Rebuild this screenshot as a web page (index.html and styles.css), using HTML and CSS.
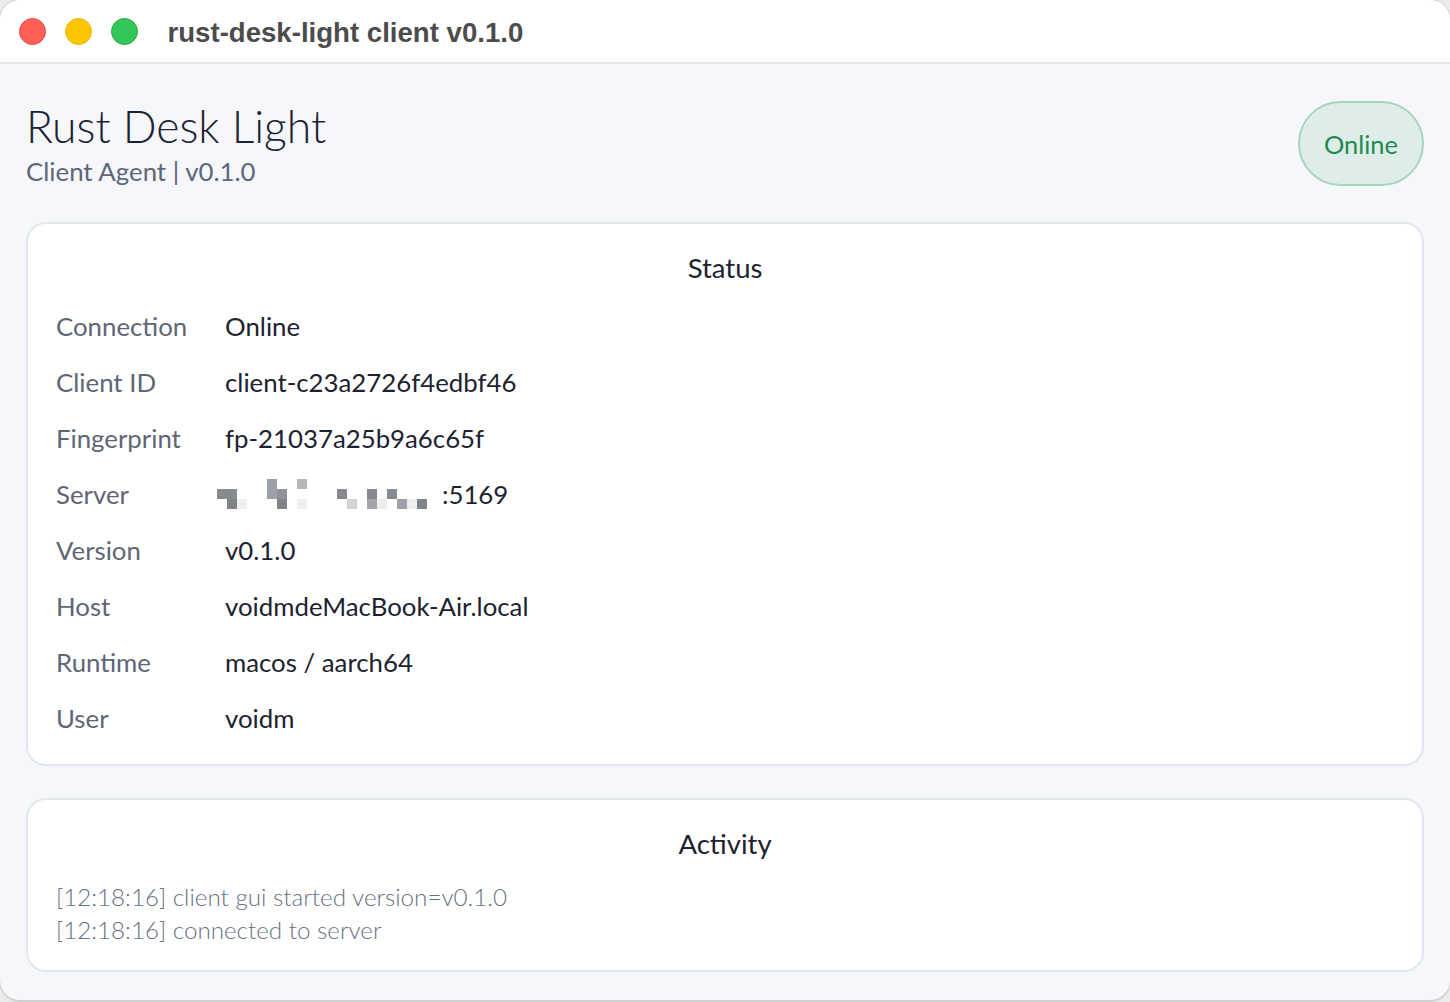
FILE: index.html
```html
<!DOCTYPE html>
<html lang="en">
<head>
<meta charset="utf-8">
<title>rust-desk-light client v0.1.0</title>
<link rel="stylesheet" href="styles.css">
</head>
<body>
<div class="window">
  <header class="titlebar">
    <div class="lights">
      <span class="light red"></span>
      <span class="light yellow"></span>
      <span class="light green"></span>
    </div>
    <div class="window-title">rust-desk-light client v0.1.0</div>
  </header>
  <main class="content">
    <section class="header">
      <div class="brand">
        <h1 class="title">Rust Desk Light</h1>
        <div class="subtitle">Client Agent | v0.1.0</div>
      </div>
      <div class="badge">Online</div>
    </section>

    <section class="card status-card">
      <h2 class="card-title">Status</h2>
      <dl class="rows">
        <dt>Connection</dt><dd>Online</dd>
        <dt>Client ID</dt><dd>client-c23a2726f4edbf46</dd>
        <dt>Fingerprint</dt><dd>fp-21037a25b9a6c65f</dd>
        <dt>Server</dt>
        <dd class="server">
          <svg class="mosaic" width="210" height="30" viewBox="0 0 210 30" aria-hidden="true">
            <rect x="50" y="0" width="10" height="10" fill="#9ea0a8"/>
            <rect x="80" y="0" width="10" height="10" fill="#b5b7bc"/>
            <rect x="0" y="10" width="20" height="10" fill="#878a91"/>
            <rect x="50" y="10" width="10" height="10" fill="#9ea0a8"/>
            <rect x="60" y="10" width="10" height="10" fill="#8f9298"/>
            <rect x="120" y="10" width="10" height="10" fill="#878a91"/>
            <rect x="150" y="10" width="10" height="10" fill="#868990"/>
            <rect x="170" y="10" width="10" height="10" fill="#878a91"/>
            <rect x="10" y="20" width="10" height="10" fill="#80838a"/>
            <rect x="20" y="20" width="10" height="10" fill="#efeff1"/>
            <rect x="60" y="20" width="10" height="10" fill="#80838a"/>
            <rect x="80" y="20" width="10" height="10" fill="#efeff1"/>
            <rect x="130" y="20" width="10" height="10" fill="#d2d3d5"/>
            <rect x="150" y="20" width="10" height="10" fill="#a3a5aa"/>
            <rect x="160" y="20" width="10" height="10" fill="#ededef"/>
            <rect x="180" y="20" width="10" height="10" fill="#a0a2a8"/>
            <rect x="190" y="20" width="10" height="10" fill="#ededef"/>
            <rect x="200" y="20" width="10" height="10" fill="#80838a"/>
          </svg>
          <span class="port">:5169</span>
        </dd>
        <dt>Version</dt><dd>v0.1.0</dd>
        <dt>Host</dt><dd>voidmdeMacBook-Air.local</dd>
        <dt>Runtime</dt><dd>macos / aarch64</dd>
        <dt>User</dt><dd>voidm</dd>
      </dl>
    </section>

    <section class="card activity-card">
      <h2 class="card-title">Activity</h2>
      <div class="log">
        <div class="log-line">[12:18:16] client gui started version=v0.1.0</div>
        <div class="log-line">[12:18:16] connected to server</div>
      </div>
    </section>
  </main>
</div>
</body>
</html>
```
FILE: styles.css
```css
html, body {
  margin: 0;
  padding: 0;
}

body {
  background: #ececec;
  width: 1450px;
  height: 1002px;
  overflow: hidden;
  font-family: "Lato", "Noto Sans", sans-serif;
}

.window {
  width: 1450px;
  height: 1000px;
  box-sizing: border-box;
  border-radius: 20px;
  overflow: hidden;
  background: #f6f7fb;
  box-shadow: 0 0 0 1px #cfcfd1, 0 2px 2px rgba(0, 0, 0, 0.12);
}

.titlebar {
  height: 62px;
  background: #ffffff;
  border-bottom: 2px solid #e6e6e8;
  display: flex;
  align-items: center;
  padding-left: 18.5px;
}

.lights {
  display: flex;
  gap: 19px;
}

.light {
  width: 27px;
  height: 27px;
  border-radius: 50%;
  box-sizing: border-box;
}

.red {
  background: #ff5f57;
  border: 1px solid #e5463f;
}

.yellow {
  background: #fec600;
  border: 1px solid #e9b600;
}

.green {
  background: #33c658;
  border: 1px solid #1faa3b;
}

.window-title {
  margin-left: 30px;
  padding-top: 4px;
  font-family: "Liberation Sans", Arial, sans-serif;
  font-weight: 700;
  font-size: 27.6px;
  color: #4c4c4c;
  letter-spacing: 0;
}

.content {
  padding: 37px 26px 0 26px;
}

.header {
  display: flex;
  justify-content: space-between;
  align-items: center;
}

.title {
  margin: 0;
  font-weight: 300;
  font-size: 44.5px;
  line-height: 50px;
  color: #1b2333;
}

.subtitle {
  margin-top: 5px;
  font-weight: 400;
  font-size: 25.8px;
  line-height: 30px;
  color: #5d6779;
}

.badge {
  width: 126px;
  height: 85px;
  box-sizing: border-box;
  border-radius: 43px;
  background: #deede7;
  border: 2px solid #a8d4bf;
  color: #1e8a51;
  font-size: 25.4px;
  display: flex;
  align-items: center;
  justify-content: center;
}

.card {
  background: #ffffff;
  border: 2px solid #e2e7ef;
  border-radius: 20px;
}

.status-card {
  margin-top: 36px;
  padding: 24px 28px 18px 28px;
}

.activity-card {
  margin-top: 32px;
  padding: 24px 28px 24px 28px;
}

.card-title {
  margin: 0;
  text-align: center;
  font-weight: 400;
  font-size: 27.5px;
  line-height: 40px;
  color: #1c2230;
}

.rows {
  margin: 10px 0 0 0;
  display: grid;
  grid-template-columns: 169px 1fr;
  font-size: 25.8px;
  line-height: 56px;
}

.rows dt {
  color: #5e6676;
}

.rows dd {
  margin: 0;
  color: #1c2230;
}

.rows dd.server {
  display: flex;
  align-items: center;
}

.mosaic {
  display: block;
  margin-left: -8px;
}

.port {
  margin-left: 15px;
}

.log {
  margin-top: 16px;
  font-weight: 300;
  font-size: 24.2px;
  line-height: 33px;
  color: #677184;
}
```
